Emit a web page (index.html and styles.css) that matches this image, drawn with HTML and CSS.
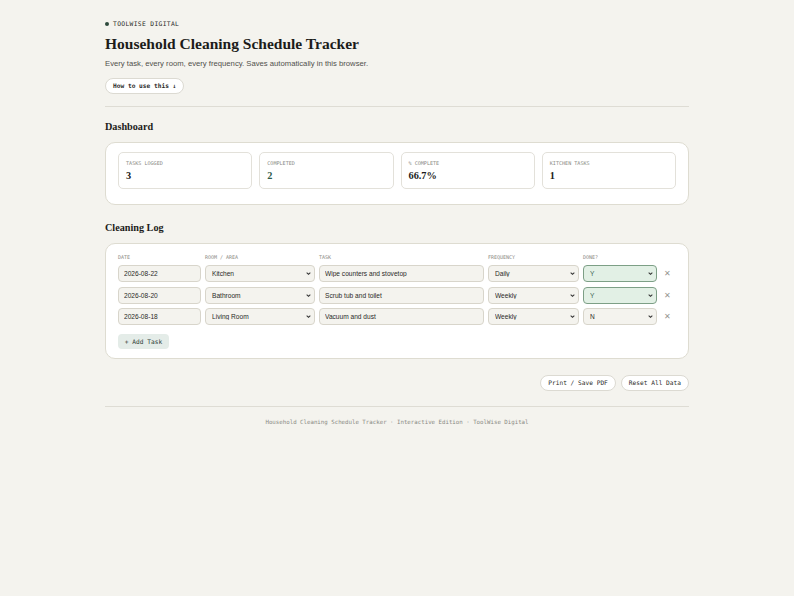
FILE: index.html
```html
<!DOCTYPE html>
<html lang="en">
<head>
<meta charset="utf-8">
<title>Household Cleaning Schedule Tracker</title>
<link rel="stylesheet" href="styles.css">
</head>
<body>
<div class="page">
  <header class="hero">
    <div class="brand"><span class="dot"></span>TOOLWISE DIGITAL</div>
    <h1>Household Cleaning Schedule Tracker</h1>
    <p class="sub">Every task, every room, every frequency. Saves automatically in this browser.</p>
    <button class="pill bold">How to use this ↓</button>
  </header>

  <section class="section first">
    <h2>Dashboard</h2>
    <div class="card dash">
      <div class="stats">
        <div class="stat"><div class="label">TASKS LOGGED</div><div class="value">3</div></div>
        <div class="stat"><div class="label">COMPLETED</div><div class="value green">2</div></div>
        <div class="stat"><div class="label">% COMPLETE</div><div class="value">66.7%</div></div>
        <div class="stat"><div class="label">KITCHEN TASKS</div><div class="value">1</div></div>
      </div>
    </div>
  </section>

  <section class="section">
    <h2>Cleaning Log</h2>
    <div class="card log">
      <div class="grid head">
        <div>DATE</div><div>ROOM / AREA</div><div>TASK</div><div>FREQUENCY</div><div>DONE?</div><div></div>
      </div>
      <div class="grid row">
        <input class="field" type="text" value="2026-08-22">
        <select class="field"><option>Kitchen</option></select>
        <input class="field" type="text" value="Wipe counters and stovetop">
        <select class="field"><option>Daily</option></select>
        <select class="field yes"><option>Y</option></select>
        <span class="del">✕</span>
      </div>
      <div class="grid row">
        <input class="field" type="text" value="2026-08-20">
        <select class="field"><option>Bathroom</option></select>
        <input class="field" type="text" value="Scrub tub and toilet">
        <select class="field"><option>Weekly</option></select>
        <select class="field yes"><option>Y</option></select>
        <span class="del">✕</span>
      </div>
      <div class="grid row">
        <input class="field" type="text" value="2026-08-18">
        <select class="field"><option>Living Room</option></select>
        <input class="field" type="text" value="Vacuum and dust">
        <select class="field"><option>Weekly</option></select>
        <select class="field"><option>N</option></select>
        <span class="del">✕</span>
      </div>
      <button class="add">+ Add Task</button>
    </div>
  </section>

  <div class="actions">
    <button class="pill">Print / Save PDF</button>
    <button class="pill">Reset All Data</button>
  </div>

  <footer class="foot">Household Cleaning Schedule Tracker · Interactive Edition · ToolWise Digital</footer>
</div>
</body>
</html>
```
FILE: styles.css
```css
* { box-sizing: border-box; }
html, body { margin: 0; padding: 0; }
body {
  background: #f4f3ee;
  color: #1c1c1a;
  font-family: "Liberation Sans", Arial, sans-serif;
}
.page {
  width: 584px;
  margin: 0 auto;
  padding-top: 19px;
}
.brand {
  font-family: "DejaVu Sans Mono", monospace;
  font-size: 6.3px;
  letter-spacing: 0.35px;
  color: #2a2a28;
  display: flex;
  align-items: center;
  gap: 4px;
  height: 9px;
}
.dot {
  width: 4px; height: 4px; border-radius: 50%;
  background: #2d4a3c;
  display: inline-block;
}
h1 {
  font-family: "Liberation Serif", "Times New Roman", serif;
  font-size: 15.5px;
  font-weight: 700;
  margin: 6px 0 0;
  line-height: 20px;
}
.sub {
  margin: 5px 0 0;
  font-size: 7.7px;
  color: #50504c;
  line-height: 10px;
}
.pill {
  font-family: "DejaVu Sans Mono", monospace;
  font-size: 6.2px;
  color: #2a2a28;
  background: #fff;
  border: 1px solid #dcdad2;
  border-radius: 9px;
  height: 16px;
  padding: 0 7px;
  line-height: 14px;
}
.pill.bold { font-weight: 700; }
.hero .pill { margin-top: 9px; }
.hero {
  padding-bottom: 12px;
  border-bottom: 1px solid #dedcd4;
}
.section h2 {
  font-family: "Liberation Serif", "Times New Roman", serif;
  font-size: 10.2px;
  font-weight: 700;
  margin: 16.5px 0 8.5px;
  line-height: 13px;
}
.section.first h2 { margin-top: 13px; }
.card {
  background: #fff;
  border: 1.5px solid #dedcd1;
  border-radius: 10px;
}
.dash { padding: 9.5px 12px 14.5px; }
.stats {
  display: grid;
  grid-template-columns: repeat(4, 1fr);
  gap: 7px;
}
.stat {
  border: 1px solid #e3e1da;
  border-radius: 5px;
  height: 37px;
  padding: 6.5px 7px 0;
}
.label {
  font-family: "DejaVu Sans Mono", monospace;
  font-size: 5.1px;
  color: #8a8a84;
  line-height: 6px;
}
.value {
  font-family: "Liberation Serif", "Times New Roman", serif;
  font-weight: 700;
  font-size: 10.3px;
  margin-top: 4.5px;
  line-height: 12px;
}
.value.green { color: #2f5b49; }
.log { padding: 10.5px 12px 9.5px; }
.grid {
  display: grid;
  grid-template-columns: 83px 110px 165px 91px 74px 1fr;
  column-gap: 4px;
  align-items: center;
}
.head {
  font-family: "DejaVu Sans Mono", monospace;
  font-size: 5px;
  color: #8a8a84;
  line-height: 6px;
  margin-bottom: 5px;
}
.row { margin-bottom: 4.5px; }
.field {
  font-family: "Liberation Sans", Arial, sans-serif;
  font-size: 6.6px;
  color: #2a2a28;
  background-color: #f4f3ee;
  border: 1px solid #d8d5cb;
  border-radius: 4px;
  height: 17px;
  padding: 0 5px;
  width: 100%;
  margin: 0;
  outline: none;
}
select.field {
  -webkit-appearance: none;
  appearance: none;
  padding: 0 12px 0 6px;
  background-image: url("data:image/svg+xml,%3Csvg xmlns='http://www.w3.org/2000/svg' width='6' height='4' viewBox='0 0 6 4'%3E%3Cpath d='M0.8 0.8 L3 3 L5.2 0.8' fill='none' stroke='%23333' stroke-width='1.2'/%3E%3C/svg%3E");
  background-repeat: no-repeat;
  background-position: right 4px center;
  background-size: 4.5px 3px;
}
.field.yes {
  background-color: #e2f0e5;
  border-color: #7d9f86;
  color: #3d6650;
}
.del {
  font-size: 7.5px;
  color: #96968f;
  text-align: center;
  padding-right: 3px;
}
.add {
  margin-top: 2.5px;
  font-family: "DejaVu Sans Mono", monospace;
  font-size: 6.2px;
  color: #2a3b33;
  background: #e4ece8;
  border: none;
  border-radius: 4px;
  height: 15px;
  width: 51px;
  padding: 0;
}
.actions {
  display: flex;
  justify-content: flex-end;
  gap: 5px;
  margin-top: 16px;
  padding-bottom: 15px;
  border-bottom: 1px solid #dedcd4;
}
.foot {
  text-align: center;
  font-family: "DejaVu Sans Mono", monospace;
  font-size: 5.75px;
  color: #8a8a84;
  padding-top: 11px;
  line-height: 8px;
}
```
